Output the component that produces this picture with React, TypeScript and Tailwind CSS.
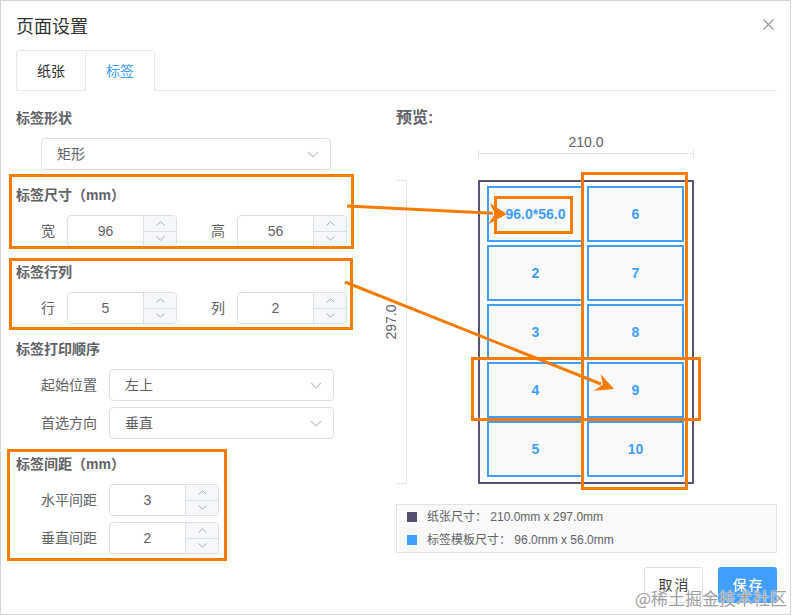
import React from "react";

const Chevron = () => (
  <svg width="12" height="7" viewBox="0 0 12 7" className="block">
    <polyline points="1,1 6,6 11,1" fill="none" stroke="#c0c4cc" strokeWidth="1.2" />
  </svg>
);

function Select({ value, w }: { value: string; w: string }) {
  return (
    <div className={`${w} h-[32px] flex items-center justify-between border border-[#dcdfe6] rounded-[4px] pl-[15px] pr-[11px] bg-white`}>
      <span className="text-[14px] leading-[20px] text-[#606266]">{value}</span>
      <Chevron />
    </div>
  );
}

function NumInput({ value }: { value: string }) {
  return (
    <div className="w-[110px] h-[32px] flex border border-[#dcdfe6] rounded-[4px] overflow-hidden bg-white">
      <div className="flex-1 flex items-center justify-center text-[14px] leading-[20px] text-[#606266]">{value}</div>
      <div className="w-[33px] flex flex-col border-l border-[#dcdfe6] bg-[#f5f7fa]">
        <div className="flex-1 flex items-center justify-center border-b border-[#dcdfe6]">
          <svg width="9" height="5" viewBox="0 0 9 5" className="block">
            <polyline points="0.5,4.5 4.5,0.8 8.5,4.5" fill="none" stroke="#a8abb2" strokeWidth="1" />
          </svg>
        </div>
        <div className="flex-1 flex items-center justify-center">
          <svg width="9" height="5" viewBox="0 0 9 5" className="block">
            <polyline points="0.5,0.5 4.5,4.2 8.5,0.5" fill="none" stroke="#a8abb2" strokeWidth="1" />
          </svg>
        </div>
      </div>
    </div>
  );
}

function Title({ children, className = "" }: { children: React.ReactNode; className?: string }) {
  return <div className={`text-[14px] leading-[20px] font-bold text-[#606266] ${className}`}>{children}</div>;
}

const labels = ["96.0*56.0", "2", "3", "4", "5", "6", "7", "8", "9", "10"];

export default function App() {
  return (
    <div className="relative w-[791px] h-[615px] border border-[#d4d4d4] bg-white overflow-hidden font-['Liberation_Sans','Noto_Sans_CJK_SC',sans-serif] text-[#606266]">
      {/* header */}
      <div className="flex items-start justify-between pl-[15px] pr-[16px] pt-[14px]">
        <div className="text-[18px] leading-[24px] text-[#303133]">页面设置</div>
        <svg width="11" height="11" viewBox="0 0 11 11" className="mt-[4px] block">
          <path d="M0.5 0.5 L10.5 10.5 M10.5 0.5 L0.5 10.5" stroke="#909399" strokeWidth="1.1" fill="none" />
        </svg>
      </div>

      {/* tabs */}
      <div className="ml-[15px] mr-[13px] mt-[11px] h-[41px] border-b border-[#e4e7ed] flex">
        <div className="flex h-[41px] border-t border-l border-r border-[#e4e7ed] rounded-t-[4px]">
          <div className="w-[68px] h-[40px] flex items-center justify-center border-b border-[#e4e7ed] text-[14px] leading-[20px] text-[#303133]">纸张</div>
          <div className="w-[69px] h-[40px] flex items-center justify-center border-l border-[#e4e7ed] border-b border-b-white bg-white text-[14px] leading-[20px] text-[#409eff]">标签</div>
        </div>
      </div>

      {/* body */}
      <div className="flex pl-[15px] pr-[13px] mt-[17px]">
        {/* left column */}
        <div className="w-[368px] flex flex-col">
          <Title>标签形状</Title>
          <div className="mt-[10px] pl-[25px]">
            <Select value="矩形" w="w-[290px]" />
          </div>

          <Title className="mt-[15px]">标签尺寸（mm）</Title>
          <div className="mt-[10px] pl-[25px] flex items-center">
            <span className="w-[14px] text-[14px] leading-[20px]">宽</span>
            <div className="ml-[12px]"><NumInput value="96" /></div>
            <span className="ml-[34px] w-[14px] text-[14px] leading-[20px]">高</span>
            <div className="ml-[12px]"><NumInput value="56" /></div>
          </div>

          <Title className="mt-[15px]">标签行列</Title>
          <div className="mt-[10px] pl-[25px] flex items-center">
            <span className="w-[14px] text-[14px] leading-[20px]">行</span>
            <div className="ml-[12px]"><NumInput value="5" /></div>
            <span className="ml-[34px] w-[14px] text-[14px] leading-[20px]">列</span>
            <div className="ml-[12px]"><NumInput value="2" /></div>
          </div>

          <Title className="mt-[15px]">标签打印顺序</Title>
          <div className="mt-[10px] pl-[25px] flex items-center">
            <span className="w-[56px] text-[14px] leading-[20px]">起始位置</span>
            <div className="ml-[12px]"><Select value="左上" w="w-[225px]" /></div>
          </div>
          <div className="mt-[6px] pl-[25px] flex items-center">
            <span className="w-[56px] text-[14px] leading-[20px]">首选方向</span>
            <div className="ml-[12px]"><Select value="垂直" w="w-[225px]" /></div>
          </div>

          <Title className="mt-[15px]">标签间距（mm）</Title>
          <div className="mt-[10px] pl-[25px] flex items-center">
            <span className="w-[56px] text-[14px] leading-[20px]">水平间距</span>
            <div className="ml-[12px]"><NumInput value="3" /></div>
          </div>
          <div className="mt-[6px] pl-[25px] flex items-center">
            <span className="w-[56px] text-[14px] leading-[20px]">垂直间距</span>
            <div className="ml-[12px]"><NumInput value="2" /></div>
          </div>
        </div>

        {/* right column */}
        <div className="w-[393px] flex flex-col">
          <div className="pl-[12px] text-[16px] leading-[20px] font-bold text-[#606266]">预览:</div>
          <div className="ml-[94px] mt-[4px] w-[216px] text-center text-[14px] leading-[20px] text-[#606266]">210.0</div>
          <svg width="216" height="10" viewBox="0 0 216 10" className="ml-[94px] -mt-[2px] block">
            <path d="M0.5 0 V9 M215.5 0 V9 M0 3.5 H216" stroke="#e4e4e4" strokeWidth="1" fill="none" />
          </svg>
          <div className="flex mt-[20px] h-[304px]">
            <div className="w-[13px] flex items-center justify-center pb-[20px]">
              <span className="-rotate-90 whitespace-nowrap text-[14px] leading-[16px] text-[#606266]">297.0</span>
            </div>
            <svg width="81" height="304" viewBox="0 0 81 304" className="block">
              <path d="M0 0.5 H10 M9.5 0 V304 M0 303.5 H10" stroke="#e4e4e4" strokeWidth="1" fill="none" />
            </svg>
            <div className="w-[216px] h-[304px] border-2 border-[#5a5475] pl-[7px] pt-[4px]">
              <div className="grid grid-flow-col grid-cols-[97px_97px] grid-rows-[repeat(5,56px)] gap-x-[3px] gap-y-[2.75px]">
                {labels.map((t) => (
                  <div key={t} className="border-2 border-[#409eff] bg-[#fafafa] flex items-center justify-center text-[14px] leading-[18px] font-bold text-[#409eff]">
                    {t}
                  </div>
                ))}
              </div>
            </div>
          </div>
          <div className="ml-[12px] mt-[20px] w-[381px] border border-[#e4e4e4] bg-[#fafafa] pl-[10px] pb-[1px]">
            <div className="flex items-center h-[23px] text-[12px] leading-[18px] text-[#606266]">
              <span className="w-[10px] h-[10px] bg-[#55506e] mr-[10px]" />
              <span>纸张尺寸： 210.0mm x 297.0mm</span>
            </div>
            <div className="flex items-center h-[23px] text-[12px] leading-[18px] text-[#606266]">
              <span className="w-[10px] h-[10px] bg-[#409eff] mr-[10px]" />
              <span>标签模板尺寸： 96.0mm x 56.0mm</span>
            </div>
          </div>
        </div>
      </div>

      {/* footer */}
      <div className="flex justify-end gap-[15px] pr-[13px] mt-[13px]">
        <button className="w-[59px] h-[36px] border border-[#dcdfe6] rounded-[3px] bg-white text-[14px] leading-[20px] text-[#404040] tracking-[2px] pl-[2px]">取消</button>
        <button className="w-[59px] h-[36px] rounded-[3px] bg-[#409eff] text-[14px] leading-[20px] text-white font-medium tracking-[2px] pl-[2px]">保存</button>
      </div>

      {/* watermark */}
      <div className="absolute left-[634px] top-[586px] text-[17px] leading-[22px] whitespace-nowrap text-[#a0a0a0] [text-shadow:0_0_2px_#fff,0_0_1px_#fff] font-['Noto_Sans_CJK_SC',sans-serif]">
        @稀土掘金技术社区
      </div>

      {/* annotations */}
      <svg
        className="absolute left-[-1px] top-[-1px] pointer-events-none"
        width="791"
        height="615"
        viewBox="0 0 791 615"
      >
        <g fill="none" stroke="#f57c00" strokeWidth="3">
          <rect x="10.5" y="175.5" width="342" height="72" />
          <rect x="10.5" y="259.5" width="341" height="69" />
          <rect x="8.5" y="450.5" width="217" height="109" />
          <rect x="495.5" y="197.5" width="76" height="35" />
          <rect x="582.5" y="173.5" width="104" height="315" />
          <rect x="472.5" y="358.5" width="227" height="61" />
          <line x1="347" y1="206" x2="493" y2="213.3" />
          <line x1="345" y1="282" x2="601" y2="384" />
        </g>
        <g fill="#f57c00">
          <polygon points="507,214 489.5,203.1 495,213.4 488.5,224" />
          <polygon points="614,389 600.6,373.9 602.9,384.6 594,390.7" />
        </g>
      </svg>
    </div>
  );
}
